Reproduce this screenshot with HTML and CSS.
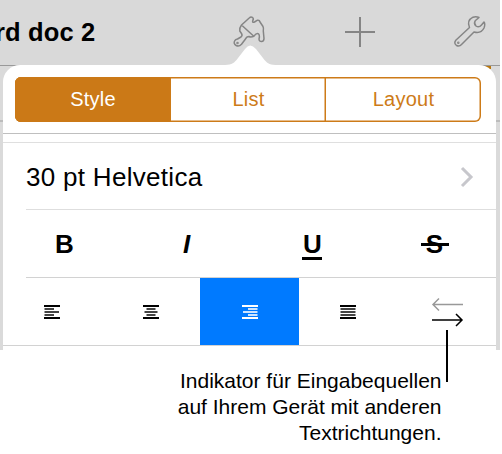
FILE: index.html
```html
<!DOCTYPE html>
<html lang="de">
<head>
<meta charset="utf-8">
<title>Textrichtung</title>
<link rel="stylesheet" href="styles.css">
</head>
<body>
<main class="figure">
  <section class="screen">
    <header class="toolbar">
      <h1 class="title">rd doc 2</h1>
      <div class="tools">
        <svg class="tool" width="36" height="36" viewBox="0 0 36 36"><path d="M9.500 12 17.500 4.800Q18.800 3.500 20.500 4.500Q22 5.500 20.800 7.500Q20 10 22.500 9L25.500 7.200Q27.500 6.800 28 9L31 13.500Q31.800 15 31.300 18L32 25.500C32 29.500 27 29.500 27 26C28 22.500 27 20.500 25.500 20.500Q24 20.500 21.800 23.200Q19 24.500 17 23.500Q14.500 23.500 13.500 26L9.500 31.200Q7 34 4.200 32.500Q1 30.500 2.800 27.700Q3.500 26.500 5.500 26L9 24Q10.800 22.500 9.500 20.500L7.800 18Q7.200 15 9.500 12ZM9.500 12 21.800 23.200"/><circle cx="5.500" cy="30" r=".5"/></svg>
        <svg class="tool plus" width="36" height="36" viewBox="0 0 36 36"><path d="M3 19H33M18 4V34"/></svg>
        <svg class="tool" width="36" height="36" viewBox="1 0 36 36"><path d="M18.500 14.500Q15.500 7.500 22 4.200Q25 3 28 4.500L24.200 7.800Q22.500 10.500 25 13Q28 15 30.500 12L33 9Q34.500 11 33 15Q30 21 23 19L10.500 31.500Q8.500 33.800 5.500 32.500Q2.500 30.200 4.800 27.200Z"/><circle cx="7.300" cy="29.700" r=".5"/></svg>
      </div>
    </header>
    <div class="ruler"></div>
    <i class="accent"></i>
    <svg class="notch" width="56" height="24" viewBox="0 0 56 24"><path d="M0 24V20C9 20 11 19 14.500 15L23 4Q28-3 34 4L42.500 15C46 19 48 20 56 20V24Z"/></svg>
    <div class="popover">
      <nav class="tabs">
        <span class="tab active">Style</span><span class="tab">List</span><span class="tab">Layout</span>
      </nav>
      <div class="divider"></div>
      <div class="font-row">
        <span>30 pt Helvetica</span>
        <svg width="16" height="22" viewBox="0 0 16 22"><path d="M2 2 11 11 2 20"/></svg>
      </div>
      <div class="formats">
        <span class="bold">B</span>
        <span class="italic">I</span>
        <span><b class="under">U</b></span>
        <span><b class="strike">S</b></span>
      </div>
      <div class="alignments">
        <span><svg width="16" height="14"><path d="M0 1H16M0 13H16"/><path class="mid" d="M.5 4H10M.5 7H15M.5 10H10"/></svg></span>
        <span><svg width="16" height="14"><path d="M0 1H16M0 13H16"/><path class="mid" d="M3.500 4H12.500M1.500 7H14.500M3.500 10H12.500"/></svg></span>
        <span class="selected"><svg width="16" height="14"><path d="M0 1H16M0 13H16"/><path class="mid" d="M6 4H15.500M1 7H15.500M6 10H15.500"/></svg></span>
        <span><svg width="16" height="14"><path d="M0 1H16M0 13H16"/><path class="mid" d="M.5 4H15.500M.5 7H15.500M.5 10H15.500"/></svg></span>
        <span><svg class="direction" width="34" height="32" viewBox="0 0 34 32"><path class="rtl" d="M33 8.500H3M9 2.500 3 8.500 9 14.500"/><path d="M2 24H32M26 18 32 24 26 30"/></svg></span>
      </div>
    </div>
  </section>
  <i class="pointer"></i>
  <p class="caption">Indikator für Eingabequellen<br>auf Ihrem Gerät mit anderen<br>Textrichtungen.</p>
</main>
</body>
</html>
```
FILE: styles.css
```css
* { box-sizing: border-box; }
body { margin: 0; background: #fff; font-family: "Liberation Sans", Arial, sans-serif; color: #000; overflow: hidden; }
svg { display: block; flex: none; fill: none; }
.figure { position: relative; width: 500px; height: 454px; }
.screen { position: relative; height: 349.5px; background: #dadada; overflow: hidden; }
.toolbar { display: flex; justify-content: space-between; height: 66px; background: #d9d9d9; border-bottom: 1px solid #999; }
.title { margin: 17px 0 0 -5px; font-size: 25.5px; line-height: 30px; letter-spacing: .15px; white-space: nowrap; }
.tools { display: flex; gap: 74px; padding: 13px 12px 0 0; }
.tool { stroke: #858585; stroke-width: 1.5; stroke-linejoin: round; }
.plus { stroke-width: 2; }
.ruler { height: 56px; border-bottom: 2px solid #bcbcbc; }
.accent { position: absolute; left: 480px; top: 66px; width: 11px; height: 3px; background: #b9770e; }
.notch { position: absolute; left: 222px; top: 45px; fill: #fff; }
.popover { position: absolute; left: 3px; top: 65px; width: 493px; height: 285px; padding-top: 12px; background: #fff; border-radius: 17px 17px 0 0; }
.tabs { display: grid; grid-template-columns: 156px 155px 155px; width: 466px; height: 45px; margin-left: 12px; box-shadow: inset 0 0 0 1.5px #cd7b18; border-radius: 6px; overflow: hidden; color: #cd7b18; font-size: 20px; letter-spacing: .25px; line-height: 44px; text-align: center; }
.tab { box-shadow: -1.5px 0 #cd7b18; }
.tab.active { background: #cb7917; color: #fff; }
.divider { height: 10px; margin-top: 11px; border-top: 1px solid #bfbfbf; border-bottom: 1px solid #dfdfdf; }
.font-row { display: flex; align-items: center; justify-content: space-between; height: 67px; margin-left: 23px; padding: 2px 20px 0 0; border-bottom: 1px solid #dedede; font-size: 26px; letter-spacing: .3px; }
.font-row svg { stroke: #c7c7cc; stroke-width: 3; }
.formats { display: grid; grid-template-columns: repeat(4, 123px); height: 68px; margin-left: 23px; border-bottom: 1px solid #d2d2d2; font-size: 26px; font-weight: bold; line-height: 69px; }
.formats span { width: 77px; text-align: center; }
.formats .italic { width: 75px; }
.italic { font-style: italic; }
.under, .strike { display: inline-block; position: relative; left: 2px; line-height: 30px; }
.under::after, .strike::after { content: ""; position: absolute; left: -1px; bottom: -1px; width: 20px; height: 3px; background: #000; }
.strike { left: 1px; }
.strike::after { left: -5px; bottom: 13px; width: 28px; }
.alignments { display: grid; grid-template-columns: 98.500px 98.500px 99px 98px 99px; height: 68px; border-bottom: 1px solid #d2d2d2; }
.alignments span { display: grid; place-items: center; }
.alignments svg { stroke: #000; stroke-width: 2; }
.alignments .mid { stroke: #444; }
.alignments .selected { background: #007aff; }
.alignments .selected svg { stroke: #fff; }
.alignments .selected .mid { stroke: #cce4ff; }
.alignments .direction { stroke-width: 1.500; }
.direction .rtl { stroke: #999; }
.pointer { position: absolute; left: 446px; top: 330px; width: 2px; height: 52px; background: #000; }
.caption { width: 441.500px; margin: 18px 0 0; text-align: right; font-size: 21px; line-height: 26px; }
```
